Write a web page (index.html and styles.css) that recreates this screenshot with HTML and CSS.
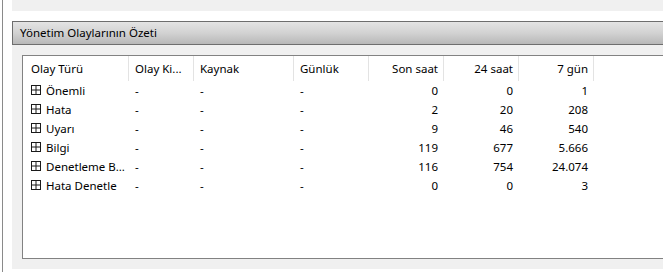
FILE: index.html
```html
<!DOCTYPE html>
<html lang="tr">
<head>
<meta charset="utf-8">
<title>Yönetim Olaylarının Özeti</title>
<link rel="stylesheet" href="styles.css">
</head>
<body>
<div class="frame">
  <div class="main">
    <div class="top-panel"></div>
    <div class="gap"></div>
    <div class="section-head">Yönetim Olaylarının Özeti</div>
    <div class="section-body">
      <div class="listbox">
        <div class="grid">
          <div class="hc">Olay Türü</div>
          <div class="hc">Olay Ki...</div>
          <div class="hc">Kaynak</div>
          <div class="hc">Günlük</div>
          <div class="hc num">Son saat</div>
          <div class="hc num">24 saat</div>
          <div class="hc num">7 gün</div>

          <div class="c first"><svg class="plus" width="10" height="10" viewBox="0 0 10 10"><rect x="0.5" y="0.5" width="9" height="9" fill="#fff" stroke="#1a1a1a"/><path d="M1 5h8M5 1v8" stroke="#1a1a1a"/></svg>Önemli</div>
          <div class="c">-</div><div class="c">-</div><div class="c">-</div>
          <div class="c num">0</div><div class="c num">0</div><div class="c num">1</div>

          <div class="c first"><svg class="plus" width="10" height="10" viewBox="0 0 10 10"><rect x="0.5" y="0.5" width="9" height="9" fill="#fff" stroke="#1a1a1a"/><path d="M1 5h8M5 1v8" stroke="#1a1a1a"/></svg>Hata</div>
          <div class="c">-</div><div class="c">-</div><div class="c">-</div>
          <div class="c num">2</div><div class="c num">20</div><div class="c num">208</div>

          <div class="c first"><svg class="plus" width="10" height="10" viewBox="0 0 10 10"><rect x="0.5" y="0.5" width="9" height="9" fill="#fff" stroke="#1a1a1a"/><path d="M1 5h8M5 1v8" stroke="#1a1a1a"/></svg>Uyarı</div>
          <div class="c">-</div><div class="c">-</div><div class="c">-</div>
          <div class="c num">9</div><div class="c num">46</div><div class="c num">540</div>

          <div class="c first"><svg class="plus" width="10" height="10" viewBox="0 0 10 10"><rect x="0.5" y="0.5" width="9" height="9" fill="#fff" stroke="#1a1a1a"/><path d="M1 5h8M5 1v8" stroke="#1a1a1a"/></svg>Bilgi</div>
          <div class="c">-</div><div class="c">-</div><div class="c">-</div>
          <div class="c num">119</div><div class="c num">677</div><div class="c num">5.666</div>

          <div class="c first"><svg class="plus" width="10" height="10" viewBox="0 0 10 10"><rect x="0.5" y="0.5" width="9" height="9" fill="#fff" stroke="#1a1a1a"/><path d="M1 5h8M5 1v8" stroke="#1a1a1a"/></svg>Denetleme B...</div>
          <div class="c">-</div><div class="c">-</div><div class="c">-</div>
          <div class="c num">116</div><div class="c num">754</div><div class="c num">24.074</div>

          <div class="c first"><svg class="plus" width="10" height="10" viewBox="0 0 10 10"><rect x="0.5" y="0.5" width="9" height="9" fill="#fff" stroke="#1a1a1a"/><path d="M1 5h8M5 1v8" stroke="#1a1a1a"/></svg>Hata Denetle</div>
          <div class="c">-</div><div class="c">-</div><div class="c">-</div>
          <div class="c num">0</div><div class="c num">0</div><div class="c num">3</div>
        </div>
      </div>
    </div>
  </div>
</div>
</body>
</html>
```

FILE: styles.css
```css
* { box-sizing: border-box; }
html, body {
  margin: 0;
  padding: 0;
  background: #fff;
  width: 663px;
  height: 272px;
  overflow: hidden;
  font-family: "Noto Sans", "Open Sans", sans-serif;
  font-size: 11.5px;
  color: #000;
}
.frame {
  margin-left: 2px;
  border-left: 1px solid #8a8a8a;
  padding-left: 9px;
  height: 272px;
}
.main {
  display: flex;
  flex-direction: column;
}
.top-panel {
  height: 11px;
  background: #f0f0f0;
}
.gap {
  height: 10px;
  background: #fff;
}
.section-head {
  height: 24px;
  border-top: 1px solid #6e6e6e;
  border-bottom: 1px solid #6e6e6e;
  border-left: 1px solid #6e6e6e;
  background: linear-gradient(#e4e4e4, #d2d2d2 50%, #b8b8b8);
  padding-left: 7px;
  line-height: 21px;
  font-size: 11.5px;
}
.section-body {
  background: #f0f0f0;
  padding: 10px 0 10px 10px;
  height: 224px;
}
.listbox {
  height: 204px;
  border: 1px solid #828282;
  border-right: none;
  background: #fff;
}
.grid {
  display: grid;
  grid-template-columns: 106px 65px 100px 75px 75px 75px 75px;
  grid-auto-rows: 19px;
  grid-template-rows: 25px;
}
.hc {
  height: 25px;
  padding: 1px 0 0 6px;
  line-height: 24px;
  white-space: nowrap;
  overflow: hidden;
  border-right: 1px solid #e3e3e3;
}
.hc:first-child { padding-left: 8px; }
.c {
  line-height: 19px;
  padding-left: 6px;
  white-space: nowrap;
  overflow: hidden;
}
.num { text-align: right; padding-left: 0; padding-right: 5px; }
.c.num { padding-right: 6px; }
.first {
  display: flex;
  align-items: center;
  padding-left: 8px;
}
.plus {
  flex: none;
  margin-right: 5px;
  margin-top: -1px;
}
```
